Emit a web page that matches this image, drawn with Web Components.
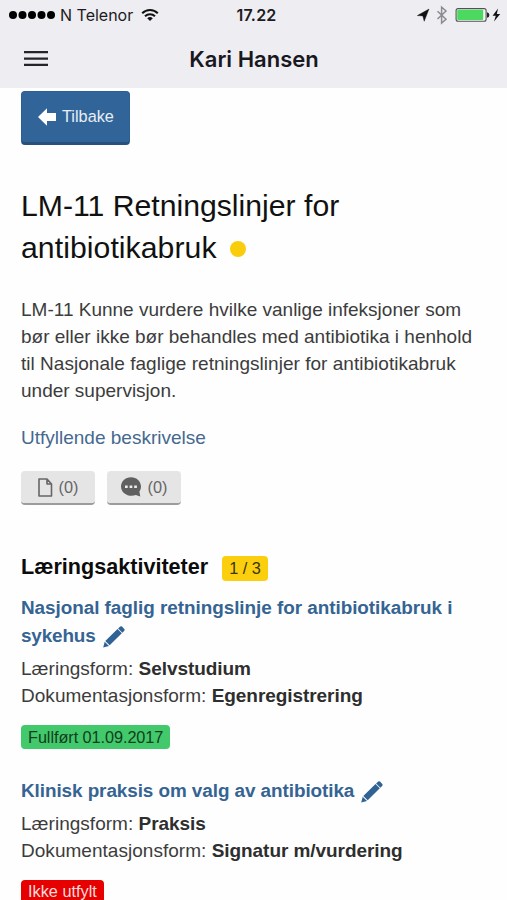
<!DOCTYPE html>
<html lang="no">
<head>
<meta charset="utf-8">
<meta name="viewport" content="width=device-width, initial-scale=1">
<title>Kari Hansen</title>
<style>
  body {
    margin: 0;
    height: 900px;
    overflow: hidden;
    background-color: #fefefe;
    color: #3c3c3c;
    font: 19px/27px "Liberation Sans", Arial, sans-serif;
  }
</style>
</head>
<body>
<app-screen>
  <status-bar slot="top" carrier="N Telenor" time="17.22"></status-bar>
  <nav-bar slot="top">Kari Hansen</nav-bar>

  <back-button>Tilbake</back-button>
  <goal-title>
    <fit-line>LM-11 Retningslinjer for</fit-line>
    <fit-line spacing="0.06">antibiotikabruk</fit-line>
  </goal-title>
  <goal-text>
    <fit-line>LM-11 Kunne vurdere hvilke vanlige infeksjoner som</fit-line>
    <fit-line>bør eller ikke bør behandles med antibiotika i henhold</fit-line>
    <fit-line spacing="0.03">til Nasjonale faglige retningslinjer for antibiotikabruk</fit-line>
    <fit-line>under supervisjon.</fit-line>
    <fit-line slot="link">Utfyllende beskrivelse</fit-line>
  </goal-text>
  <count-buttons files="(0)" comments="(0)"></count-buttons>
  <section-heading badge="1 / 3">Læringsaktiviteter</section-heading>

  <learning-activity form="Selvstudium" documentation="Egenregistrering">
    <fit-line slot="title" spacing="-0.04">Nasjonal faglig retningslinje for antibiotikabruk i</fit-line>
    <fit-line slot="title-end" spacing="-0.15">sykehus</fit-line>
    <state-label slot="state" type="done">Fullført 01.09.2017</state-label>
  </learning-activity>
  <learning-activity form="Praksis" documentation="Signatur m/vurdering">
    <fit-line slot="title-end" spacing="-0.07">Klinisk praksis om valg av antibiotika</fit-line>
    <state-label slot="state" type="empty">Ikke utfylt</state-label>
  </learning-activity>
</app-screen>

<script>
class BaseElement extends HTMLElement {
  constructor() {
    super();
    this.shadowDOM = this.attachShadow({ mode: "open" });
  }

  connectedCallback() {
    this.shadowDOM.innerHTML = this.render();
  }
}

class AppScreen extends BaseElement {
  render() {
    return `
      <style>
      :host { display: flex; flex-direction: column; }
      header { background-color: #eeedf2; height: 88px; }
      main { display: flex; flex-direction: column; align-items: flex-start; padding: 3px 21px 0; }
      </style>
      <header><slot name="top"></slot></header>
      <main><slot></slot></main>`;
  }
}
customElements.define("app-screen", AppScreen);

// one line of text, with its own letter spacing
class FitLine extends BaseElement {
  render() {
    return `
      <style>
      :host { display: block; white-space: nowrap; letter-spacing: ${this.getAttribute("spacing") || 0}px; }
      </style>
      <slot></slot>`;
  }
}
customElements.define("fit-line", FitLine);

class StatusBar extends BaseElement {
  render() {
    return `
      <style>
      :host {
        display: grid;
        grid-template-columns: 1fr auto 1fr;
        align-items: center;
        height: 30px;
        padding: 0 6px 0 9px;
        color: #1c1b22;
        font: 16px/30px Inter, sans-serif;
      }
      div { display: flex; align-items: center; }
      .right { justify-content: flex-end; }
      .carrier { margin: 0 8px 0 5px; }
      b { font-size: 16px; font-weight: 600; letter-spacing: 0.2px; margin-left: 3px; }
      svg { display: block; }
      </style>
      <div>
        <svg width="46" height="10" fill="#000">
          <circle cx="4" cy="5" r="4"/><circle cx="13.5" cy="5" r="4"/><circle cx="23" cy="5" r="4"/>
          <circle cx="32.5" cy="5" r="4"/><circle cx="42" cy="5" r="4"/>
        </svg>
        <span class="carrier">${this.getAttribute("carrier")}</span>
        <svg width="18" height="14" viewBox="0 0 18 14" fill="none" stroke="#111" stroke-width="2">
          <path d="M1.200 5.200a11 11 0 0 1 15.600 0M4 8.200a7.100 7.100 0 0 1 10 0"/>
          <path d="M9 13L6.200 10.300a4 4 0 0 1 5.600 0z" fill="#111" stroke="none"/>
        </svg>
      </div>
      <b>${this.getAttribute("time")}</b>
      <div class="right">
        <svg width="84" height="20" viewBox="0 0 84 20">
          <path d="M12 4L7.200 16.300L5.800 10.900L.3 10.600z" fill="#111" stroke="#111" stroke-width=".4"/>
          <path d="M20.500 6.200l8.500 8L24.600 18V2.200L29 6l-8.500 8" fill="none" stroke="#8b8b90" stroke-width="1.5"/>
          <rect x="39.1" y="3.6" width="30" height="12.600" rx="2" fill="#f7f7f9" stroke="#4e5550" stroke-width="1.1"/>
          <rect x="40.2" y="4.7" width="26" height="10.400" rx="1" fill="#4cd95f"/>
          <path d="M70 7.200q2.400.4 2.400 2.800T70 12.800z" fill="#222"/>
          <path d="M81 3.400l-5.400 7.400h3.200l-1.800 5.800L83.200 9h-3.400z" fill="#111"/>
        </svg>
      </div>`;
  }
}
customElements.define("status-bar", StatusBar);

class NavBar extends BaseElement {
  render() {
    return `
      <style>
      :host {
        display: grid;
        grid-template-columns: 1fr auto 1fr;
        align-items: center;
        height: 58px;
        padding: 0 23px 0 24px;
        box-sizing: border-box;
        color: #19181f;
        font: 600 22px/56px Inter, sans-serif;
      }
      svg { display: block; }
      </style>
      <svg width="24" height="16" fill="#25242b"><path d="M0 0h24v2.300H0zM0 6.400h24v2.300H0zM0 12.800h24v2.300H0z"/></svg>
      <slot></slot>`;
  }
}
customElements.define("nav-bar", NavBar);

class BackButton extends BaseElement {
  render() {
    return `
      <style>
      button {
        display: flex;
        align-items: center;
        gap: 6.5px;
        width: 109px;
        height: 54px;
        padding: 0 0 1px 15.5px;
        box-sizing: border-box;
        border: 1px solid #2d5f92;
        border-bottom: 3px solid #27507b;
        border-radius: 4px;
        background-color: #316599;
        color: #e8eef5;
        font: 16.3px "Liberation Sans", Arial, sans-serif;
      }
      </style>
      <button>
        <svg width="18" height="18" fill="#fff"><path d="M0 9L9 .3V5h9v8H9v4.700z"/></svg>
        <slot></slot>
      </button>`;
  }
}
customElements.define("back-button", BackButton);

class GoalTitle extends BaseElement {
  render() {
    return `
      <style>
      :host { display: flex; align-items: flex-end; margin-top: 40px; }
      h1 { margin: 0; font-size: 30.2px; font-weight: normal; line-height: 42px; color: #111; width: 196px; }
      i { width: 16px; height: 16px; border-radius: 50%; background-color: #f9cd0c; margin: 0 0 12px 13px; }
      </style>
      <h1><slot></slot></h1><i></i>`;
  }
}
customElements.define("goal-title", GoalTitle);

class GoalText extends BaseElement {
  render() {
    return `
      <style>
      :host { display: block; margin-top: 27px; }
      a { display: block; margin-top: 20px; color: #45698f; }
      </style>
      <slot></slot>
      <a><slot name="link"></slot></a>`;
  }
}
customElements.define("goal-text", GoalText);

class CountButtons extends BaseElement {
  render() {
    return `
      <style>
      :host { display: flex; gap: 12px; margin-top: 20px; }
      button {
        display: flex;
        align-items: center;
        justify-content: center;
        gap: 6px;
        width: 74px;
        height: 34px;
        padding: 0;
        box-sizing: border-box;
        border: 0;
        border-bottom: 2px solid #9c9c9c;
        border-radius: 4px;
        background-color: #e5e5e5;
        color: #666;
        font: 16.3px "Liberation Sans", Arial, sans-serif;
      }
      </style>
      <button>
        <svg width="15" height="19" viewBox="0 0 15 19" fill="none" stroke="#666" stroke-width="1.6" stroke-linejoin="round">
          <path d="M1 1h8l4.500 5v12H1zM9 1v5h4.500"/>
        </svg>
        ${this.getAttribute("files")}
      </button>
      <button>
        <svg width="21" height="20" viewBox="0 0 21 20">
          <path d="M10 .2C15.700 .2 20 4.300 20 9.500c0 2-.6 3.600-1.600 5l.9 5.100-4.500-1.500C8 20.500 0 16.500 0 9.500 0 4.300 4.300.2 10 .2z" fill="#606060"/>
          <path d="M4 8.500h2.700v2.500H4zM8.600 8.500h2.700v2.500H8.600zM13.200 8.500h2.700v2.500h-2.700z" fill="#eee"/>
        </svg>
        ${this.getAttribute("comments")}
      </button>`;
  }
}
customElements.define("count-buttons", CountButtons);

class SectionHeading extends BaseElement {
  render() {
    return `
      <style>
      :host { display: flex; align-items: center; gap: 13px; margin-top: 50px; height: 26px; }
      h2 { margin: 0 0 2px; font-size: 21.6px; line-height: 26px; color: #0c0c0c; white-space: nowrap; width: 188px; }
      span {
        width: 46px;
        height: 25px;
        border-radius: 4px;
        background-color: #fccf0e;
        color: #3a3410;
        font-size: 16.3px;
        line-height: 25px;
        text-align: center;
      }
      </style>
      <h2><slot></slot></h2>
      <span>${this.getAttribute("badge")}</span>`;
  }
}
customElements.define("section-heading", SectionHeading);

class LearningActivity extends BaseElement {
  render() {
    return `
      <style>
      :host { display: block; margin-top: 13px; }
      :host(:last-of-type) { margin-top: 28px; }
      h3 { margin: 0 0 5px; font-size: 18.9px; line-height: 28px; color: #356493; }
      h3 div { display: flex; align-items: center; gap: 7px; }
      h3 svg { margin-top: 2px; }
      p { margin: 0; white-space: nowrap; letter-spacing: 0.03px; }
      b { color: #2e2e2e; letter-spacing: -0.06px; }
      footer { display: flex; margin-top: 16px; }
      </style>
      <h3>
        <slot name="title"></slot>
        <div>
          <slot name="title-end"></slot>
          <svg width="22" height="22" viewBox="0 0 22 22" fill="#316294">
            <path d="M.2 21.500L1.700 15.700L6 19.900zM2.300 15L14.500 3.100l4.300 4.200L6.700 19.300zM15.100 2.500L17.200.6q.9-.7 1.800 0L21.300 2.900q.7.9 0 1.800L19.400 6.700z"/>
          </svg>
        </div>
      </h3>
      <p>Læringsform: <b>${this.getAttribute("form")}</b></p>
      <p>Dokumentasjonsform: <b>${this.getAttribute("documentation")}</b></p>
      <footer><slot name="state"></slot></footer>`;
  }
}
customElements.define("learning-activity", LearningActivity);

class StateLabel extends BaseElement {
  render() {
    return `
      <style>
      :host {
        display: block;
        height: 24px;
        padding: 0 7px;
        border-radius: 4px;
        font-size: 16.3px;
        line-height: 24px;
        white-space: nowrap;
      }
      :host([type="done"]) { background-color: #42c96b; color: #123d1e; letter-spacing: -0.07px; }
      :host([type="empty"]) { background-color: #e60000; color: #fbdcdc; line-height: 22px; }
      </style>
      <slot></slot>`;
  }
}
customElements.define("state-label", StateLabel);
</script>
</body>
</html>
